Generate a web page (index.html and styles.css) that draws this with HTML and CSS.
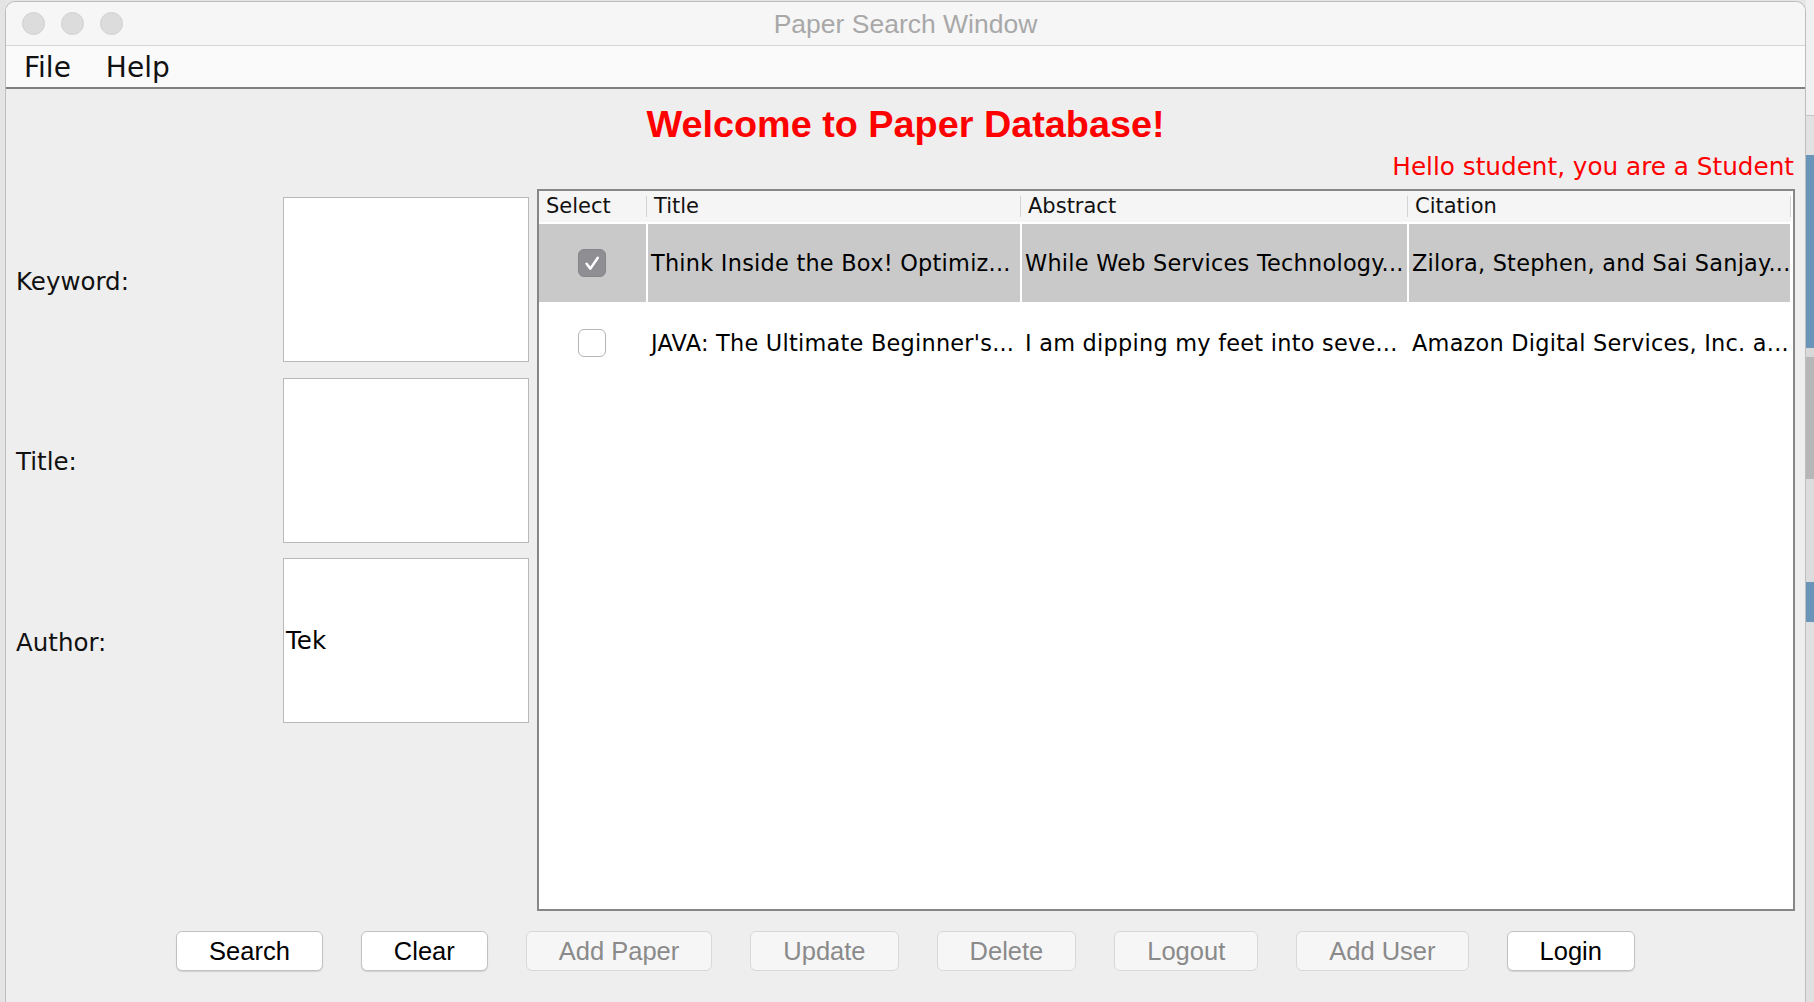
FILE: index.html
```html
<!DOCTYPE html>
<html>
<head>
<meta charset="utf-8">
<title>Paper Search Window</title>
<link rel="stylesheet" href="styles.css">
</head>
<body>
<div class="screen">
  <div class="desk-left"></div>
  <div class="window">
    <div class="titlebar">
      <div class="lights"><span class="light"></span><span class="light"></span><span class="light"></span></div>
      <div class="wtitle">Paper Search Window</div>
      <div></div>
    </div>
    <div class="menubar"><span class="menu">File</span><span class="menu">Help</span></div>
    <div class="content">
      <h1 class="welcome">Welcome to Paper Database!</h1>
      <div class="hello">Hello student, you are a Student</div>
      <div class="main">
        <div class="form">
          <div class="flabel">Keyword:</div><div class="field"></div>
          <div class="flabel">Title:</div><div class="field"></div>
          <div class="flabel">Author:</div><div class="field">Tek</div>
        </div>
        <div class="table">
          <div class="thead">
            <div class="th">Select</div>
            <div class="th">Title</div>
            <div class="th">Abstract</div>
            <div class="th">Citation</div>
          </div>
          <div class="trow selected">
            <div class="td sel"><span class="cb on"><svg width="28" height="28" viewBox="0 0 28 28"><path d="M8.6 14.8 L12.4 19.6 L19.8 8.8" fill="none" stroke="#fff" stroke-width="2.5" stroke-linecap="round" stroke-linejoin="round"/></svg></span></div>
            <div class="td">Think Inside the Box! Optimiz...</div>
            <div class="td">While Web Services Technology...</div>
            <div class="td">Zilora, Stephen, and Sai Sanjay...</div>
          </div>
          <div class="trow">
            <div class="td sel"><span class="cb"></span></div>
            <div class="td">JAVA: The Ultimate Beginner's...</div>
            <div class="td">I am dipping my feet into seve...</div>
            <div class="td">Amazon Digital Services, Inc. a...</div>
          </div>
        </div>
      </div>
      <div class="buttons">
        <button class="btn">Search</button>
        <button class="btn">Clear</button>
        <button class="btn off">Add Paper</button>
        <button class="btn off">Update</button>
        <button class="btn off">Delete</button>
        <button class="btn off">Logout</button>
        <button class="btn off">Add User</button>
        <button class="btn">Login</button>
      </div>
    </div>
  </div>
  <div class="desk-right">
    <div class="dr dr1"></div>
    <div class="dr dr2"></div>
    <div class="dr dr3"></div>
    <div class="dr dr4"></div>
    <div class="dr dr5"></div>
    <div class="dr dr6"></div>
    <div class="dr dr7"></div>
    <div class="dr dr8"></div>
    <div class="dr dr9"></div>
  </div>
</div>
</body>
</html>
```
FILE: styles.css
```css
* { box-sizing: border-box; }
html, body { margin: 0; padding: 0; }
body { background: #e6e6e6; overflow: hidden; }

.screen { display: flex; width: 1814px; height: 1002px; overflow: hidden; }
.desk-left { width: 5px; flex: none; background: #e4e4e4; }

.window {
  width: 1801px; flex: none; height: 1001px; margin-top: 1px;
  border: 1px solid #bdbdbd; border-bottom: none;
  border-radius: 10px 10px 0 0;
  background: #eeeeee;
  display: flex; flex-direction: column; overflow: hidden;
}

.titlebar {
  height: 44px; flex: none;
  background: #f6f6f6; border-bottom: 1px solid #d4d4d4;
  display: grid; grid-template-columns: 1fr auto 1fr; align-items: center;
}
.lights { display: flex; gap: 16px; padding-left: 16px; }
.light {
  width: 23px; height: 23px; border-radius: 50%;
  background: #dcdcdc; border: 1px solid #d0d0d0;
}
.wtitle { font: 26.5px/30px "Liberation Sans", Arial, sans-serif; color: #a8a8a8; }

.menubar {
  height: 43px; flex: none;
  padding: 4px 0 0 18px;
  background: #fafafa; border-bottom: 2px solid #7f7f7f;
  display: flex; gap: 35px;
  font: 28px/36px "DejaVu Sans", sans-serif; color: #111;
}

.content { flex: 1; padding: 13px 10px 0 10px; display: flex; flex-direction: column; }
.welcome {
  margin: 0; text-align: center;
  font: bold 37.8px/44px "Liberation Sans", Arial, sans-serif; color: #ff0000;
}
.hello {
  margin-top: 6px; text-align: right; padding-right: 1px;
  font: 24.7px/30px "DejaVu Sans", sans-serif; color: #ff0000;
}

.main { margin-top: 7px; display: flex; gap: 8px; }
.form {
  display: grid; grid-template-columns: 267px 246px;
  grid-auto-rows: 165px; row-gap: 15.5px;
  padding-top: 8px; align-content: start;
}
.flabel { display: flex; align-items: center; font: 24.5px "DejaVu Sans", sans-serif; color: #111; padding-top: 3px; }
.field {
  background: #fff; border: 1px solid #b9b9b9;
  display: flex; align-items: center; padding-left: 2px;
  font: 24.5px "DejaVu Sans", sans-serif; color: #000;
}

.table {
  width: 1258px; height: 722px;
  border: 2px solid #878787; background: #fff;
  display: flex; flex-direction: column; gap: 2px;
}
.thead {
  align-self: flex-start;
  display: grid; grid-template-columns: 107px 374px 387px 384px;
  height: 31px; background: #f5f5f5; align-items: center;
}
.th {
  font: 21px/21px "DejaVu Sans", sans-serif; color: #111;
  padding-left: 7px; border-left: 1px solid #d3d3d3;
}
.th:first-child { border-left: none; padding-left: 7px; }
.th:last-child { border-right: 1px solid #d3d3d3; }

.trow {
  align-self: flex-start;
  display: grid; grid-template-columns: 107px 372px 385px 381px;
  column-gap: 2px; height: 78px;
}
.td {
  display: flex; align-items: center; padding-left: 3px;
  font: 22.4px "DejaVu Sans", sans-serif; letter-spacing: 0.25px; color: #000;
  white-space: nowrap; overflow: hidden;
}
.selected .td { background: #c9c9c9; }
.td.sel { justify-content: center; padding-left: 0; padding-right: 1px; }
.cb {
  width: 28px; height: 28px; border-radius: 6px;
  border: 1px solid #b5b5b5; background: #fff; display: block;
}
.cb.on { background: #8e8e93; border-color: #85858a; display: flex; align-items: center; justify-content: center; }
.cb svg { display: block; flex: none; }

.buttons { display: flex; justify-content: center; gap: 38px; margin-top: 20px; }
.btn {
  height: 40px; padding: 0 32px; border-radius: 6px;
  font: 25.5px/38px "Liberation Sans", Arial, sans-serif;
  border: 1px solid #c2c2c2; background: #fff; color: #000;
  box-shadow: 0 1px 1px rgba(0,0,0,0.12);
}
.btn.off { background: #f6f6f6; border-color: #d8d8d8; color: #8a8a8a; box-shadow: none; }

.desk-right { width: 8px; flex: none; display: flex; flex-direction: column; }
.dr1 { height: 115px; background: #f0f0f0; }
.dr2 { height: 1px; background: #c4c4c4; }
.dr3 { height: 39px; background: #e2e2e2; }
.dr4 { height: 193px; background: #6a94b8; }
.dr5 { height: 9px; background: #d8d8d8; }
.dr6 { height: 122px; background: #b7b7b7; }
.dr7 { height: 103px; background: #dcdcdc; }
.dr8 { height: 40px; background: #6a94b8; }
.dr9 { flex: 1; background: #e0e0e0; }
```
